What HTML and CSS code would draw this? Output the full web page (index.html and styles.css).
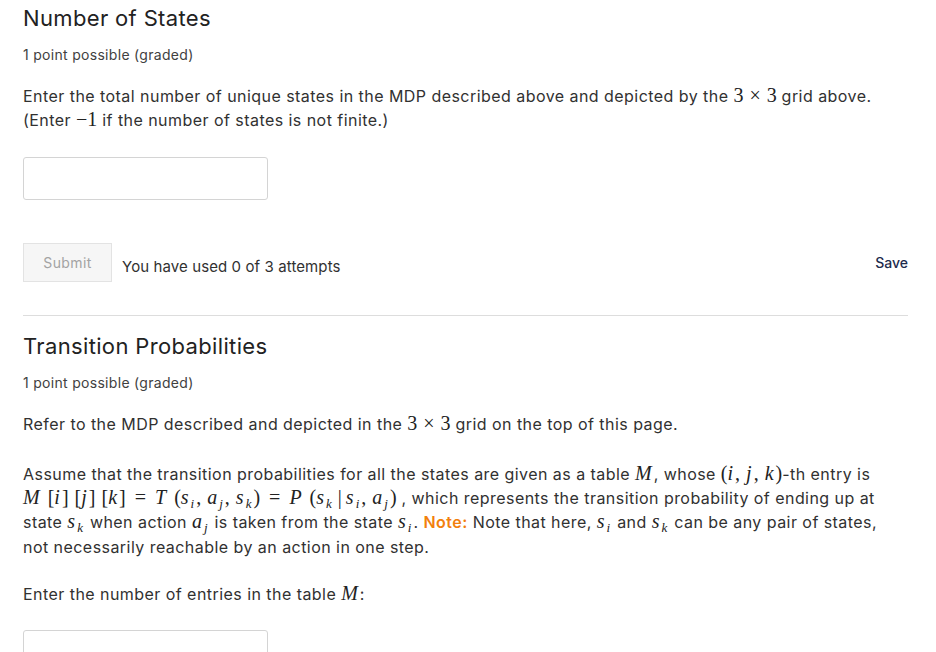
FILE: index.html
```html
<!DOCTYPE html>
<html lang="en">

<head>
    <meta charset="UTF-8">
    <meta name="viewport" content="width=device-width, initial-scale=1.0">
    <title>Problems</title>
    <link rel="stylesheet" href="styles.css">
</head>

<body>
    <div class="problem">
        <h3 class="problem-title">Number of States</h3>
        <div class="points">1 point possible (graded)</div>
        <p>
            Enter the total number of unique states in the MDP described above and depicted by the
            <span class="m">3<span class="bin">&times;</span>3</span> grid above.<br>
            (Enter <span class="m">&minus;1</span> if the number of states is not finite.)
        </p>
        <input class="answer" type="text">

        <div class="action">
            <button class="submit" disabled>Submit</button>
            <span class="attempts">You have used 0 of 3 attempts</span>
            <span class="save">Save</span>
        </div>
    </div>

    <div class="problem">
        <h3 class="problem-title">Transition Probabilities</h3>
        <div class="points">1 point possible (graded)</div>
        <p>
            Refer to the MDP described and depicted in the <span class="m">3<span class="bin">&times;</span>3</span> grid on the top of this page.
        </p>
        <p class="assume">
            Assume that the transition probabilities for all the states are given as a table <span class="m"><i>M</i></span>,
            whose <span class="m">(<i>i</i>,<span class="sp"></span><i>j</i>,<span class="sp"></span><i>k</i>)</span>-th entry is
            <span class="m"><i>M</i><span class="sp"></span>[<i>i</i>]<span class="sp"></span>[<i>j</i>]<span class="sp"></span>[<i>k</i>]<span class="rel">=</span><i>T</i><span class="sp"></span>(<i>s<sub>i</sub></i>,<span class="sp"></span><i>a<sub>j</sub></i>,<span class="sp"></span><i>s<sub>k</sub></i>)<span class="rel">=</span><i>P</i><span class="sp"></span>(<i>s<sub>k</sub></i><span class="mid">|</span><i>s<sub>i</sub></i>,<span class="sp"></span><i>a<sub>j</sub></i>)</span> ,
            which represents the transition probability of ending up at state <span class="m"><i>s<sub>k</sub></i></span>
            when action <span class="m"><i>a<sub>j</sub></i></span> is taken from the state <span class="m"><i>s<sub>i</sub></i></span>.
            <b class="note">Note:</b> Note that here, <span class="m"><i>s<sub>i</sub></i></span> and
            <span class="m"><i>s<sub>k</sub></i></span> can be any pair of states, not necessarily reachable by an action in one step.
        </p>
        <p class="last">Enter the number of entries in the table <span class="m"><i>M</i></span>:</p>
        <input class="answer" type="text">
    </div>
</body>

</html>
```

FILE: styles.css
```css
body,
html {
    margin: 0;
    padding: 0;
    background: #fff;
    color: #313131;
    font-family: Inter, "Noto Sans", sans-serif;
    font-size: 16px;
}

body {
    padding: 0 28px 0 23px;
}

.problem {
    border-bottom: 1px solid #ddd;
    padding-top: 4px;
    padding-bottom: 33px;
}

.problem + .problem {
    border-bottom: none;
    padding-top: 16px;
}

.problem-title {
    margin: 0;
    font-size: 22px;
    font-weight: 400;
    line-height: 28px;
    letter-spacing: 0.35px;
    color: #222;
}

.points {
    margin-top: 13px;
    font-size: 14px;
    line-height: 20px;
    letter-spacing: 0.3px;
    color: #414141;
}

p {
    margin: 24px 0 0;
    line-height: 24.3px;
    letter-spacing: 0.45px;
}

.points + p {
    margin-top: 19px;
}

p.assume {
    margin-top: 26px;
    padding-right: 6px;
}

p.last {
    margin-top: 23px;
}

/* inline math */
.m {
    font-family: "Liberation Serif", "DejaVu Serif", serif;
    font-size: 20px;
    line-height: 1;
    letter-spacing: 0;
    color: #222;
    white-space: nowrap;
}

.m i {
    font-style: italic;
    padding-right: 2px;
}

.m sub {
    font-size: 13px;
    line-height: 0;
    vertical-align: -4px;
    padding-left: 2px;
}

.m .sp {
    display: inline-block;
    width: 6px;
}

.m .rel {
    margin: 0 9px;
}

.m .bin {
    margin: 0 6px;
}

.m .mid {
    margin: 0 4px;
}

.note {
    color: #f2800d;
    font-weight: 600;
}

.answer {
    display: block;
    margin-top: 24px;
    width: 245px;
    height: 43px;
    box-sizing: border-box;
    border: 1px solid #d4d4d4;
    border-radius: 3px;
    padding: 0 10px;
    font-size: 16px;
    outline: none;
}

.action {
    display: flex;
    align-items: flex-start;
    margin-top: 43px;
}

.submit {
    width: 89px;
    height: 39px;
    border: 1px solid #e3e3e3;
    background: #f6f6f6;
    color: #a3a3a3;
    font-family: inherit;
    font-size: 14px;
    letter-spacing: 0.4px;
    border-radius: 0;
}

.attempts {
    margin-left: 10px;
    margin-top: 14px;
    font-size: 15px;
    line-height: 20px;
    letter-spacing: 0.1px;
}

.save {
    margin-left: auto;
    margin-top: 10px;
    font-size: 14px;
    line-height: 20px;
    font-weight: 500;
    color: #1d2b4d;
}
```
